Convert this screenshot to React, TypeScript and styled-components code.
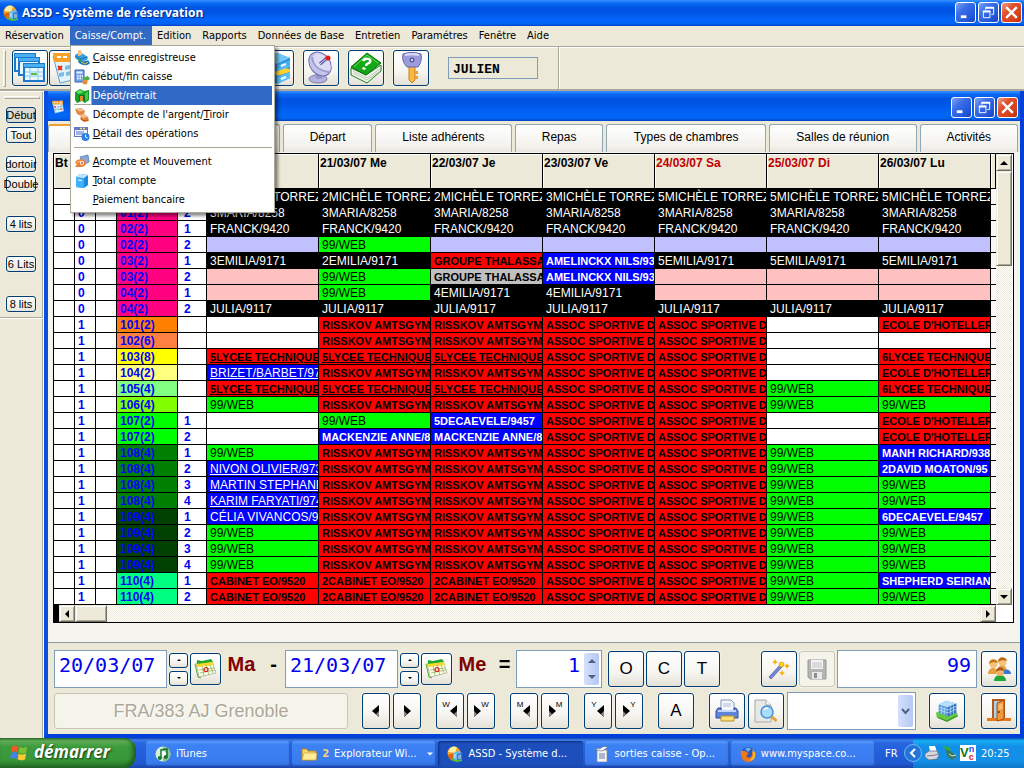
import React from "react";
import styled, { createGlobalStyle, css } from "styled-components";

const ui = `"DejaVu Sans Condensed", "DejaVu Sans", sans-serif`;
const arial = `"Liberation Sans", Arial, sans-serif`;
const mono = `"Liberation Mono", "Courier New", monospace`;
const wideMono = `"DejaVu Sans Mono", monospace`;
const beige = "#ece9d8";

const GlobalStyle = createGlobalStyle`
  *, *::before, *::after { box-sizing: border-box; }
  body { margin: 0; background: ${beige}; font-family: ${ui}; font-size: 11px; color: #000; }
  button, input, select { font: inherit; color: inherit; margin: 0; padding: 0; }
  svg { display: block; flex: none; }
`;

const Screen = styled.div`
  display: flex;
  flex-direction: column;
  min-height: 100vh;
  overflow: hidden;
`;

const blueBar = css`
  background: linear-gradient(#3a92ff 0, #0a6bf5 3px, #0054e3 8px, #0054e3 12px, #0366fb 80%, #0262ee 92%, #0043c8 100%);
`;

const TitleBar = styled.header<{ $child?: boolean }>`
  ${blueBar}
  display: flex;
  align-items: center;
  gap: ${(p) => (p.$child ? 0 : 3)}px;
  height: ${(p) => (p.$child ? 30 : 26)}px;
  padding: ${(p) => (p.$child ? "2px 2px 0 3px" : "0 2px 1px 3px")};
`;

const TitleText = styled.h1`
  flex: 1;
  margin: 0;
  font: bold 12px/18px "Open Sans", "Noto Sans", sans-serif;
  color: #fff;
  text-shadow: 1px 1px 1px #002a86;
`;

const Spacer = styled.div`
  flex: 1;
`;

const CaptionGroup = styled.div`
  display: flex;
  gap: 2px;
`;

const CaptionButton = styled.button<{ $close?: boolean }>`
  display: grid;
  place-items: center;
  width: 21px;
  height: 21px;
  border: 1px solid #fff;
  border-radius: 3px;
  background: ${(p) =>
    p.$close
      ? "linear-gradient(135deg, #f0a088 0, #e0502c 35%, #d8401c 75%, #b8300c 100%)"
      : "linear-gradient(135deg, #7fa5f5 0, #3a6fe8 35%, #2456dc 75%, #1a44b8 100%)"};
`;

const MenuBar = styled.nav`
  display: flex;
  height: 20px;
  background: ${beige};
`;

const MenuHolder = styled.div`
  position: relative;
`;

const MenuButton = styled.button<{ $open?: boolean }>`
  height: 19px;
  padding: 0 6px 1px 5px;
  border: 0;
  white-space: nowrap;
  background: ${(p) => (p.$open ? "#316ac5" : "transparent")};
  color: ${(p) => (p.$open ? "#fff" : "#000")};
`;

const Menu = styled.div`
  position: absolute;
  z-index: 10;
  top: 19px;
  left: 0;
  width: 205px;
  padding: 2px 2px 3px 3px;
  border: 1px solid #aca899;
  background: #fff;
  box-shadow: 3px 3px 3px rgba(0, 0, 0, 0.45);
`;

const MenuRow = styled.button<{ $active?: boolean }>`
  display: grid;
  grid-template-columns: 18px 1fr;
  width: 100%;
  height: 19px;
  padding: 0;
  border: 0;
  background: none;
  text-align: left;
  align-items: center;
  white-space: nowrap;
  color: ${(p) => (p.$active ? "#fff" : "#000")};
  & > span {
    padding-left: 1px;
    line-height: 19px;
    background: ${(p) => (p.$active ? "#316ac5" : "transparent")};
  }
`;

const IconSlot = styled.i<{ $active?: boolean }>`
  display: block;
  width: 18px;
  height: 19px;
  padding-top: 2px;
  border: solid #aca899;
  border-width: ${(p) => (p.$active ? "0 1px 1px 0" : "0")};
`;

const MenuRule = styled.hr`
  margin: 4px 0 4px 0;
  border: 0;
  border-top: 1px solid #aca899;
`;

const ToolStrip = styled.div`
  display: flex;
  height: 45px;
  border-top: 1px solid #aca899;
  border-bottom: 2px solid #aca899;
  box-shadow: inset 0 1px #fff;
`;

const ToolBar = styled.div`
  display: flex;
  align-items: center;
  gap: 9px;
  width: 559px;
  padding: 0 20px 0 3px;
  border-right: 1px solid #aca899;
  box-shadow: 1px 0 #fff;
`;

const ToolLead = styled.div`
  display: flex;
  align-items: center;
  gap: 6px;
`;

const Grip = styled.div<{ $flat?: boolean }>`
  width: ${(p) => (p.$flat ? "36px" : "3px")};
  height: ${(p) => (p.$flat ? "3px" : "37px")};
  border: 1px solid;
  border-color: #fff #aca899 #aca899 #fff;
`;

const xpButton = css`
  display: grid;
  place-items: center;
  border: 1px solid #003c74;
  border-radius: 3px;
  background: linear-gradient(#fff, #f6f5f1 60%, #e4e1d6);
  box-shadow: 0 0 0 1px #f2f0e6;
`;

const ToolButton = styled.button<{ $w?: number }>`
  ${xpButton}
  flex: none;
  width: ${(p) => p.$w ?? 36}px;
  height: 36px;
  font: 17px ${arial};
  &:disabled {
    border-color: #c9c7ba;
    background: #f5f4ea;
    color: #aca899;
  }
`;

const ToolPair = styled.div`
  display: flex;
  gap: 1px;
`;

const UserField = styled.input`
  width: 90px;
  height: 22px;
  margin-left: 10px;
  padding: 2px 4px 0;
  border: 1px solid #7f9db9;
  background: ${beige};
  font: bold 13px ${mono};
`;

const Workspace = styled.div`
  flex: 1;
  display: grid;
  grid-template-columns: 44px minmax(0, 1fr);
`;

const Side = styled.aside`
  border-right: 1px solid #fff;
  box-shadow: inset -1px 0 #aca899;
`;

const Dock = styled.div`
  display: flex;
  flex-direction: column;
  align-items: flex-start;
  gap: 4px;
  height: 227px;
  padding: 4px 0 0 4px;
  border-bottom: 1px solid #aca899;
  border-top: 1px solid #fff;
  box-shadow: 0 1px #fff;
`;

const DockButton = styled.button<{ $gap?: number; $on?: boolean }>`
  ${xpButton}
  justify-content: center;
  width: 30px;
  height: 16px;
  margin: ${(p) => p.$gap ?? 0}px 0 0 2px;
  font: 11px/14px ${arial};
  white-space: nowrap;
  background: ${(p) => (p.$on ? "#dedbd0" : "linear-gradient(#fff, #e8e6dc)")};
`;

const ChildWindow = styled.section`
  display: flex;
  flex-direction: column;
  min-width: 0;
  border: solid #0040d8;
  border-width: 0 4px 4px 4px;
  border-left-color: #0a50e0;
  background: ${beige};
`;

const Tabs = styled.div`
  display: flex;
  gap: 3px;
  height: 31px;
  padding: 3px 2px 0 0;
`;

const Tab = styled.button<{ $w: number; $active?: boolean }>`
  flex: ${(p) => p.$w} 1 0;
  min-width: 0;
  padding: 0 0 3px;
  border: 1px solid #91a7b4;
  border-top: ${(p) => (p.$active ? "2px solid #f0a030" : "1px solid #91a7b4")};
  border-bottom: 0;
  border-radius: 3px 3px 0 0;
  background: linear-gradient(#fff, #f2f1ec 80%, #e8e6de);
  font: 12px ${arial};
  white-space: nowrap;
`;

const TabPage = styled.div`
  flex: 1;
  padding: 1px 6px 0 5px;
  background: #f5f4ef;
  border-bottom: 1px solid #919b9c;
`;

const GridBox = styled.div`
  display: grid;
  grid-template-columns: minmax(0, 1fr) 17px;
  border: 1px solid #000;
  background: #fff;
`;

const Planning = styled.table`
  width: 100%;
  table-layout: fixed;
  border-collapse: separate;
  border-spacing: 0;
  font: 12px/13px ${arial};
`;

const HeadCell = styled.th<{ $red?: boolean }>`
  height: 35px;
  padding: 3px 0 0 1px;
  vertical-align: top;
  text-align: left;
  white-space: nowrap;
  overflow: hidden;
  background: ${beige};
  border-right: 1px solid #000;
  border-bottom: 1px solid #000;
  box-shadow: inset 1px 1px #fff;
  color: ${(p) => (p.$red ? "#c00000" : "#000")};
`;

const NumCell = styled.td<{ $bg?: string; $pad?: number }>`
  height: 16px;
  padding: 2px 0 0 ${(p) => p.$pad ?? 3}px;
  background: ${(p) => p.$bg ?? "#fff"};
  border-right: 1px solid #000;
  border-bottom: 1px solid #000;
  color: #00f;
  font-weight: bold;
`;

const kinds = {
  K: css`background: #000; color: #fff;`,
  W: css`background: #0f0;`,
  R: css`background: #f00; font-weight: bold; font-size: 11px;`,
  U: css`background: #f00; font-weight: bold; font-size: 11px; text-decoration: underline;`,
  L: css`background: #c0c0ff;`,
  P: css`background: #ffc0c0;`,
  B: css`background: #00f; color: #fff; font-weight: bold; font-size: 11px;`,
  b: css`background: #00f; color: #fff; text-decoration: underline;`,
  c: css`background: #00f; color: #fff;`,
  G: css`background: #c0c0c0; font-weight: bold; font-size: 11px;`,
  E: css`background: #fff;`,
};
type Kind = keyof typeof kinds;

const StayCell = styled.td<{ $kind: Kind }>`
  height: 16px;
  padding: 2px 0 0 3px;
  overflow: hidden;
  white-space: nowrap;
  border-right: 1px solid #000;
  border-bottom: 1px solid #000;
  ${(p) => kinds[p.$kind]}
`;

const EdgeCell = styled.td`
  padding: 0;
  border-bottom: 1px solid #000;
  background: #f8f8f8;
`;

const track = css`
  background: repeating-conic-gradient(#fff 0 25%, ${beige} 0 50%) 0 0 / 2px 2px;
`;

const raised = css`
  background: ${beige};
  border: 1px solid;
  border-color: ${beige} #716f64 #716f64 ${beige};
  box-shadow: inset 1px 1px #fff, inset -1px -1px #aca899;
`;

const VScroll = styled.div`
  ${track}
  display: flex;
  flex-direction: column;
  width: 16px;
`;

const HScroll = styled.div`
  ${track}
  display: flex;
  height: 17px;
  border-left: 5px solid #000;
`;

const ScrollButton = styled.button`
  ${raised}
  display: grid;
  place-items: center;
  flex: none;
  width: 16px;
  height: 17px;
`;

const Thumb = styled.div<{ $w?: number; $h?: number }>`
  ${raised}
  width: ${(p) => p.$w ?? 16}px;
  height: ${(p) => p.$h ?? 17}px;
`;

const Controls = styled.div`
  display: flex;
  flex-direction: column;
  gap: 4px;
  padding: 7px 3px 4px 6px;
`;

const ControlRow = styled.div`
  display: flex;
  align-items: center;
  height: 38px;
`;

const Group = styled.div<{ $ml?: number; $gap?: number; $grow?: boolean }>`
  display: flex;
  align-items: center;
  flex: ${(p) => (p.$grow ? "1 1 0" : "none")};
  min-width: 0;
  gap: ${(p) => p.$gap ?? 3}px;
  margin-left: ${(p) => p.$ml ?? 0}px;
`;

const Field = styled.input<{ $w?: number; $right?: boolean }>`
  flex: ${(p) => (p.$w ? "none" : "1 1 0")};
  width: ${(p) => (p.$w ? p.$w + "px" : "0")};
  min-width: 0;
  height: 38px;
  padding: 0 5px 8px 4px;
  border: 1px solid #7f9db9;
  background: #fff;
  color: #0000f0;
  font: 20px ${wideMono};
  text-align: ${(p) => (p.$right ? "right" : "left")};
`;

const CountBox = styled.div`
  display: flex;
  flex: none;
  width: 86px;
  height: 38px;
  padding: 2px;
  border: 1px solid #7f9db9;
  background: #fff;
`;

const CountInput = styled.input`
  flex: 1;
  min-width: 0;
  padding: 0 4px 8px 0;
  border: 0;
  color: #0000f0;
  font: 20px ${wideMono};
  text-align: right;
`;

const CountSpin = styled.div`
  display: flex;
  flex-direction: column;
  width: 15px;
  border-radius: 2px;
  background: linear-gradient(90deg, #d6e0fc, #b4c8f4);
`;

const FlatButton = styled.button`
  display: grid;
  place-items: center;
  flex: 1;
  border: 0;
  background: none;
`;

const Spin = styled.div`
  display: flex;
  flex-direction: column;
  gap: 3px;
  width: 19px;
`;

const SpinButton = styled.button`
  ${xpButton}
  height: 15px;
`;

const DateButton = styled.button`
  ${xpButton}
  width: 31px;
  height: 32px;
`;

const DayName = styled.span<{ $dark?: boolean; $w: number }>`
  flex: none;
  width: ${(p) => p.$w}px;
  padding-bottom: 10px;
  text-align: center;
  white-space: nowrap;
  font: bold 20px/24px ${arial};
  color: ${(p) => (p.$dark ? "#000" : "#800000")};
`;

const HostelButton = styled.button`
  flex: 1 1 0;
  height: 36px;
  border: 1px solid #c9c7ba;
  border-radius: 3px;
  background: #f5f4ea;
  font: 18px ${arial};
  color: #aca899;
  text-shadow: 1px 1px #fff;
`;

const ComboBox = styled.div`
  position: relative;
  width: 129px;
  height: 38px;
`;

const Combo = styled.select`
  appearance: none;
  width: 100%;
  height: 100%;
  border: 1px solid #7f9db9;
  border-radius: 0;
  background: #fff;
`;

const ComboArrow = styled.span`
  position: absolute;
  top: 3px;
  right: 3px;
  bottom: 3px;
  display: grid;
  place-items: center;
  width: 15px;
  border-radius: 2px;
  background: linear-gradient(90deg, #d6e0fc, #b4c8f4);
  pointer-events: none;
`;

const TaskBar = styled.footer`
  display: flex;
  height: 30px;
  background: linear-gradient(#1941a5 0, #3a80ee 2px, #2a66e0 5px, #245edb 50%, #2058d0 85%, #1a44a8 100%);
`;

const StartButton = styled.button`
  display: flex;
  align-items: center;
  gap: 5px;
  width: 136px;
  margin-right: 10px;
  padding: 0 0 2px 10px;
  border: 0;
  border-radius: 0 12px 12px 0;
  background: linear-gradient(#2c6e2c 0, #5eac56 3px, #3c9a3c 9px, #389838 70%, #2c7c2c 100%);
  box-shadow: inset -3px -2px 4px #1d5c1d;
  color: #fff;
  font: italic bold 17px/22px "Open Sans", sans-serif;
  text-shadow: 1px 1px 2px #123c12;
`;

const Tasks = styled.div`
  flex: 1;
  display: flex;
  gap: 2px;
  min-width: 0;
  padding: 3px 10px 2px 0;
`;

const Task = styled.button<{ $on?: boolean }>`
  flex: 1 1 0;
  min-width: 0;
  display: flex;
  align-items: center;
  gap: 5px;
  padding: 0 6px 0 9px;
  border: 0;
  border-radius: 3px;
  background: ${(p) =>
    p.$on ? "#1c4fbb" : "linear-gradient(#5a9afc 0, #3c81f3 4px, #3a7cf0 80%, #3470dc 100%)"};
  box-shadow: ${(p) => (p.$on ? "inset 1px 1px 2px #0c2c7c" : "inset -1px -1px 1px #2a5cc4")};
  color: #fff;
  white-space: nowrap;
  & > b { color: #ffd070; }
`;

const Language = styled.div`
  display: flex;
  align-items: center;
  width: 28px;
  color: #fff;
`;

const Tray = styled.div`
  display: flex;
  align-items: center;
  gap: 2px;
  width: 111px;
  background: linear-gradient(#0c59b9 0, #18b0f2 3px, #1290e8 8px, #1290e8 75%, #0f78c8 100%);
  color: #fff;
  & > svg:first-child { margin-left: -9px; }
  & > time { margin-left: 3px; }
`;

/* ---------- drawings ---------- */

type S = { s?: number };
const Svg = ({ s = 16, v = 16, children }: { s?: number; v?: number; children: React.ReactNode }) => (
  <svg width={s} height={s} viewBox={`0 0 ${v} ${v}`} aria-hidden="true">{children}</svg>
);

const AppIcon = ({ s = 16 }: S) => (
  <Svg s={s}>
    <circle cx="7" cy="7" r="6.5" fill="#f8a020" />
    <path d="M3 2a6 6 0 0 1 7-.5L8 7 1 6z" fill="#fff0a0" />
    <path d="M1 9l5-2v8C3 14 1 12 1 9z" fill="#d86810" />
    <path d="M6 7l5-2 4 2v7l-5 2-4-2z" fill="#68b8f0" />
    <path d="M10 8l5-1v7l-5 2z" fill="#2f7cc8" />
    <path d="M4 12l6 2.500 5-1.500v2l-6 1-5-2z" fill="#4cc030" />
    <path d="M7 9h2M7 11h2M11 10h3M11 12h3" stroke="#fff" strokeWidth=".8" />
  </Svg>
);

const MinIcon = () => <Svg s={15}><path d="M3 11h6v3H3z" fill="#fff" /></Svg>;
const RestoreIcon = () => (
  <Svg s={15}>
    <path d="M5 5V2.500h8.500V10H11" fill="none" stroke="#fff" />
    <path d="M5 3h9" stroke="#fff" strokeWidth="2" />
    <path d="M2.500 6.500h7v7h-7z" fill="none" stroke="#fff" />
    <path d="M2 7h8" stroke="#fff" strokeWidth="2" />
  </Svg>
);
const CloseIcon = () => <Svg s={17}><path d="M3 3l10 10M13 3L3 13" stroke="#fff" strokeWidth="2.200" /></Svg>;

const WindowsIcon = () => (
  <Svg s={34} v={34}>
    {[[1, 2], [5, 6], [10, 12]].map(([x, y]) => (
      <g key={x}>
        <path d={`M${x} ${y}h22v19h-22z`} fill="#1c78c8" />
        <path d={`M${x + 1} ${y + 1}h20v3h-20z`} fill="#48b0f0" />
        <path d={`M${x + 2} ${y + 5}h18v12h-18z`} fill="#e8f6ff" />
      </g>
    ))}
    <path d="M12 21h18M12 25h18M17 17v12M25 17v12" stroke="#8cc8ec" />
    <path d="M18 22h6v2h-6z" fill="#58c040" />
  </Svg>
);

const AgendaIcon = ({ s = 34 }: S) => (
  <Svg s={s} v={34}>
    <path d="M3 5l24-3 4 25-21 5z" fill="#e4f2fc" stroke="#58a4d8" />
    <path d="M3 2h26v9H4z" fill="#f8a028" />
    <path d="M7 6h4M13 6h4M21 5h5M21 8h5" stroke="#fff" strokeWidth="2" />
    <path d="M8 15l4 4m0-4l-4 4" stroke="#e03018" strokeWidth="2" />
    <path d="M15 15l5-1v4l-5 1zM22 14l5-1v4l-5 1zM9 22l5-1v4l-5 1zM16 21l5-1v4l-5 1z" fill="#78bce8" />
    <path d="M23 20l4 4m0-4l-4 4" stroke="#e03018" strokeWidth="2" />
  </Svg>
);

const CabinetIcon = () => (
  <Svg s={34} v={34}>
    <path d="M6 8l12-6 13 5v20l-13 6-12-6z" fill="#2888d8" />
    <path d="M6 8l12-6 13 5-13 6z" fill="#70c8f8" />
    <path d="M18 14l13-5v5l-13 5z" fill="#48b0f0" />
    <path d="M16 21l10-4 5 1v3l-13 4z" fill="#ffd030" />
    <path d="M18 18l13-4v2l-13 4zM18 26l13-5v6l-13 6z" fill="#58c0f8" />
    <path d="M22 15l5-2M22 28l5-2" stroke="#fff" strokeWidth="2" />
  </Svg>
);

const DishIcon = () => (
  <Svg s={34} v={34}>
    <ellipse cx="14" cy="28" rx="9" ry="4" fill="#b4b4dc" stroke="#7878b0" />
    <path d="M11 22h8l-1 6h-6z" fill="#9898cc" />
    <ellipse cx="16" cy="13" rx="10" ry="13" transform="rotate(-38 16 13)" fill="#c4c4ea" stroke="#7070b0" />
    <ellipse cx="18" cy="12" rx="7" ry="11" transform="rotate(-38 18 12)" fill="#dcdcf4" />
    <path d="M8 6c1 9 8 14 17 15" fill="none" stroke="#9c9cd0" strokeWidth="2" />
    <path d="M16 13l7-6" stroke="#5050a0" strokeWidth="3" />
    <path d="M16 13l7-6" stroke="#e8e8ff" />
    <circle cx="24" cy="7" r="2.500" fill="#e81818" />
  </Svg>
);

const BookIcon = () => (
  <Svg s={34} v={34}>
    <path d="M2 17l15 7 15-10v6L18 32 2 24z" fill="#f4f8f0" stroke="#188018" />
    <path d="M2 16L18 2l14 10-15 12z" fill="#14a818" stroke="#087008" />
    <path d="M5 16L18 4l11 8" fill="none" stroke="#60e050" />
    <path d="M14 10c2-4 9-2 7 1-1 2-4 1-4 4" fill="none" stroke="#fff" strokeWidth="2.500" />
    <path d="M14 16l3 1-1 2-3-1z" fill="#fff" />
    <path d="M4 20l14 7 13-9M4 22l14 7 13-9" fill="none" stroke="#b8c8b0" />
  </Svg>
);

const KeyIcon = () => (
  <Svg s={34} v={34}>
    <path d="M15 15h6v14l-3 3-3-3z" fill="#f8b848" stroke="#c88018" />
    <path d="M21 20h3v3h-3zM21 25h3v3h-3z" fill="#f0a030" />
    <path d="M9 3c5-2 13-2 18 0 1 4 0 9-3 13H13C9 12 8 7 9 3z" fill="#9c9cdc" stroke="#6464a4" />
    <path d="M11 4c4-1 10-1 14 0" stroke="#dcdcfc" fill="none" strokeWidth="2" />
    <circle cx="18" cy="9" r="2.500" fill="#5858a8" /><circle cx="18" cy="9" r="1" fill="#fff" />
  </Svg>
);

const RegisterIcon = () => (
  <Svg>
    <path d="M1 5l5-3 8 5-1 3-6 2-6-4z" fill="#38a0e0" /><path d="M4 0h3l1 5-4 1z" fill="#f8c088" />
    <path d="M2 6l5 3 6-2" stroke="#1870b8" fill="none" /><path d="M4 11c2-2 6 2 10-1l2 3c-3 4-9 2-11 0z" fill="#1878c0" />
    <path d="M2 8l3 3 3 1v-2z" fill="#28a048" /><path d="M7 12l4 2 3-2" stroke="#f8c020" fill="none" />
  </Svg>
);
const CalcIcon = () => (
  <Svg>
    <path d="M1 1h9v12H1z" fill="#78a0e8" stroke="#3060b0" /><path d="M2.500 2.500h6v2h-6z" fill="#e0f0ff" />
    <path d="M3 7h6M3 9.500h6" stroke="#fff" strokeDasharray="1.500 1" strokeWidth="1.500" />
    <path d="M8 9l6-2 2 3-5 3z" fill="#40b050" /><circle cx="11" cy="13" r="2.500" fill="#e89030" />
  </Svg>
);
const DepositIcon = () => (
  <Svg>
    <path d="M1 4l5-3 4 2 5-1v10l-4 3-3-2-5 2-2-3z" fill="#18a028" />
    <path d="M2 4l4-2 4 2-5 2z" fill="#60e060" />
    <path d="M5 7h6v6H5z" fill="#087818" /><path d="M6 8h3v5H6z" fill="#e88830" />
    <path d="M11 5l3-1v7l-3 2z" fill="#40d048" />
  </Svg>
);
const CoinsIcon = () => (
  <Svg>
    <path d="M1 2l6-1 4 3-1 3 4 3 1 4-5 1-4-3 1-3-4-2z" fill="#e08840" />
    <path d="M2 2.500l5-1 3 2-4 1zM6 8l4-1 3 3-4 1z" fill="#f8c090" />
    <path d="M7 12l3 2 4-1" stroke="#a85018" fill="none" />
  </Svg>
);
const DetailIcon = () => (
  <Svg>
    <path d="M0 1h14v10H0z" fill="#6878c0" /><path d="M1 4h12v6H1z" fill="#f0f4ff" />
    <path d="M6 2.500h2M9 2.500h2" stroke="#ffe060" strokeWidth="1.500" /><path d="M2 6h8M2 8h8" stroke="#5070d0" />
    <circle cx="11.500" cy="11" r="4" fill="#2880e0" /><path d="M11.500 8.500V11l2 1" stroke="#fff" fill="none" />
  </Svg>
);
const MoveIcon = () => (
  <Svg>
    <path d="M6 3l8-2 1 7-6 3z" fill="#88a8d8" stroke="#5070a8" strokeWidth=".7" />
    <path d="M1 9c1-4 7-5 10-2 2 3 0 6-4 6H1l2-3z" fill="#f08030" />
    <path d="M3 9c2-2 4-2 6-1" stroke="#ffd098" fill="none" /><circle cx="8" cy="9" r="2" fill="#fff" /><circle cx="8" cy="9" r="1" fill="#e04010" />
  </Svg>
);
const TotalIcon = () => (
  <Svg>
    <path d="M2 4l4-3 8 1v10l-4 3-8-1z" fill="#1888e0" /><path d="M2 4l8 1v10l-8-1z" fill="#40b0f8" />
    <path d="M6 1l8 1-4 3-8-1z" fill="#c0e8ff" /><path d="M4 7l4 .5" stroke="#fff" />
  </Svg>
);

const CalendarIcon = () => (
  <Svg s={24} v={24}>
    <path d="M2 6l16-2 4 12-17 4z" fill="#fffef0" stroke="#a0a878" strokeWidth=".7" />
    <path d="M3 3l5 1 9-2 2 3L3 8z" fill="#20a830" />
    <path d="M2 7l17-2 1 3L4 10z" fill="#f8d828" />
    <path d="M1 7l3 13 3 1" fill="none" stroke="#58a830" />
    <path d="M5 13l15-2M6 16l15-3M8 9l2 10M12 8l3 10M16 8l3 8" stroke="#8cb860" strokeWidth=".8" />
    <circle cx="12" cy="12.500" r="2" fill="none" stroke="#e02020" strokeWidth="1.200" />
  </Svg>
);

const WandIcon = () => (
  <Svg s={24} v={24}>
    <path d="M2 20L13 8l2 2L4 22z" fill="#7888d8" stroke="#404c98" strokeWidth=".7" />
    <circle cx="14.500" cy="7.500" r="2.500" fill="#ffd020" stroke="#c09010" strokeWidth=".6" />
    <path d="M8 2l1 2 2 1-2 1-1 2-1-2-2-1 2-1zM20 6l1 2 2 1-2 1-1 2-1-2-2-1 2-1zM15 13l1 2 2 1-2 1-1 2-1-2-2-1 2-1z" fill="#f8b010" />
  </Svg>
);
const SaveIcon = () => (
  <Svg s={24} v={24}>
    <path d="M3 3h18v19H5l-2-2z" fill="#b4b4b4" stroke="#989898" /><path d="M6 3h12v9H6z" fill="#f4f4f4" />
    <path d="M7 6h10M7 8h10M7 10h10" stroke="#c0c0c0" /><path d="M7 15h10v7H7z" fill="#e8e8e8" /><path d="M9 16h3v5H9z" fill="#8c8c8c" />
  </Svg>
);
const PeopleIcon = () => (
  <Svg s={26} v={26}>
    <path d="M2 18c0-8 10-8 10 0zM12 14c0-7 9-7 9 2z" fill="#e8a040" /><path d="M16 18c0-6 9-6 9 0z" fill="#3878d0" />
    <circle cx="7.500" cy="8" r="4" fill="#f8c078" /><path d="M3 8c0-6 8-6 9-1-3-1-6-1-9 1z" fill="#c87818" />
    <circle cx="16.500" cy="6" r="4" fill="#f8c078" /><path d="M12 6c0-6 8-6 9-1-3-1-6-1-9 1z" fill="#b86810" />
    <path d="M8 25c0-8 12-8 12 0z" fill="#20a838" /><circle cx="14" cy="16" r="4" fill="#f0b468" />
    <path d="M10 16c0-6 8-6 8-1-3-1-5-1-8 1z" fill="#a85818" />
  </Svg>
);
const PrinterIcon = ({ s = 24 }: S) => (
  <Svg s={s} v={24}>
    <path d="M6 1h10l3 3v8H6z" fill="#f4f8ff" stroke="#8090b8" /><path d="M8 5h8M8 7h8" stroke="#b0bcd8" />
    <path d="M3 9h3v3h13V9h2l2 3v7H1v-7z" fill="#5c84dc" stroke="#3450a0" /><path d="M3 12h18" stroke="#c0d4ff" strokeWidth="2" />
    <path d="M6 17h13v5H6z" fill="#ffe070" stroke="#b89028" />
  </Svg>
);
const TrayPrinter = () => (
  <Svg>
    <path d="M5 1h6l2 6H6z" fill="#fff" /><path d="M1 9l4-3h8l2 4-2 4-8 1-4-3z" fill="#d8d8e0" stroke="#606878" strokeWidth=".7" />
    <path d="M3 11l9-1 2-1" stroke="#787c90" fill="none" />
  </Svg>
);
const PreviewIcon = () => (
  <Svg s={26} v={26}>
    <path d="M2 2h11l5 5v17H2z" fill="#e8e8e8" stroke="#a8a8a8" /><path d="M13 2v5h5" fill="#fff" stroke="#a8a8a8" />
    <circle cx="14" cy="14" r="6" fill="#a8dcfc" stroke="#4890d8" strokeWidth="1.500" /><path d="M11 12c1-2 3-2 4-2" stroke="#fff" fill="none" strokeWidth="1.500" />
    <path d="M18.500 18.500l5 4.500" stroke="#e8a030" strokeWidth="3" />
  </Svg>
);
const BuildingIcon = () => (
  <Svg s={24} v={26}>
    <path d="M1 15l7-3 16 3 1 4-12 6-11-5z" fill="#68c840" /><path d="M3 20l10 4 11-6" stroke="#2c8820" fill="none" />
    <path d="M4 6l8-4 11 3v10l-9 4-10-4z" fill="#5a9cdc" /><path d="M4 6l8-4 11 3-9 4z" fill="#b8e0fc" /><path d="M14 9l9-4v10l-9 4z" fill="#3474bc" />
    <path d="M5 9l9 3M5 12l9 3M14 12l9-4M14 15l9-4M7 8v8M10 9v8M17 8v9M20 7v9" stroke="#c4e4fc" strokeWidth=".8" />
  </Svg>
);
const DoorIcon = () => (
  <Svg s={26} v={26}>
    <path d="M1 20h24v3H1z" fill="#e87818" /><path d="M6 1h13v19H6z" fill="#b85818" /><path d="M8 3h9v17H8z" fill="#a8d4f4" />
    <path d="M11 5l7-3v19l-7 2z" fill="#f09838" stroke="#a85010" /><path d="M12.500 7l4-2v6l-4 1z" fill="#ffc070" /><circle cx="12.800" cy="14" r="1" fill="#603000" />
  </Svg>
);

const Arrow = ({ d, w = 8, c = "#000" }: { d: "l" | "r" | "u" | "d"; w?: number; c?: string }) => {
  const p = { l: "M6 0v8L2 4z", r: "M2 0v8l4-4z", u: "M0 6h8L4 2z", d: "M0 2h8L4 6z" }[d];
  return <Svg s={w} v={8}><path d={p} fill={c} /></Svg>;
};

const StepLabel = styled.span<{ $back?: boolean }>`
  display: flex;
  flex-direction: ${(p) => (p.$back ? "row" : "row-reverse")};
  align-items: flex-start;
  font: 8px/8px ${arial};
  padding-bottom: 3px;
  & > svg { margin-top: 3px; }
`;

const BigArrow = ({ back }: { back?: boolean }) => (
  <svg width="8" height="14" viewBox="0 0 8 14" aria-hidden="true">
    <path d={back ? "M7 1v12L0 7z" : "M1 1v12l7-6z"} fill="#000" />
    <path d={back ? "M7 7v6L4 10z" : "M1 7v6l3-3z"} fill="#888" />
  </svg>
);

const Flag = () => (
  <Svg s={19} v={20}>
    <path d="M2 4c3-2 5-1 7 0L8 10C6 9 4 8 1 10z" fill="#f05828" /><path d="M10 4c2 1 4 2 8 0l-1 6c-3 2-5 1-8 0z" fill="#7cc030" />
    <path d="M1 11c3-2 5-1 7 0l-1 6c-2-1-4-2-7 0z" fill="#4880f0" /><path d="M9 11c2 1 4 2 8 0l-1 6c-3 2-5 1-8 0z" fill="#f8c830" />
  </Svg>
);
const ITunes = () => (
  <Svg><circle cx="8" cy="8" r="7.500" fill="#d8f0d8" /><path d="M8 .5a7.500 7.500 0 0 1 0 15z" fill="#88c890" /><circle cx="8" cy="8" r="3" fill="#fff" />
    <path d="M6 12V4l6-1v8" fill="none" stroke="#107830" strokeWidth="1.500" /><circle cx="4.800" cy="12" r="2" fill="#107830" /><circle cx="10.800" cy="11" r="2" fill="#107830" /></Svg>
);
const Folder = () => (
  <Svg><path d="M1 3h5l1 2h8v9H1z" fill="#f8d868" stroke="#b08820" /><path d="M3 7h13l-1 7H1z" fill="#ffec98" stroke="#c09830" strokeWidth=".6" /></Svg>
);
const Sheet = () => (
  <Svg><path d="M3 4h10v12H3z" fill="#f4f4f8" stroke="#888" strokeWidth=".7" /><path d="M5 8h6M5 10h6M5 12h6" stroke="#6878a0" />
    <path d="M1 4c3-4 4 0 6-2s5-2 7 0c-3 0-4 3-7 3-2 0-3-2-6-1z" fill="#f8f8f8" stroke="#506088" strokeWidth=".6" /></Svg>
);
const Fox = () => (
  <Svg><circle cx="8" cy="8" r="7" fill="#2858b8" /><path d="M5 3c3-2 5-1 6 0L8 6z" fill="#68b0e8" />
    <path d="M1 4c1 1 2 1 3 1 2 0 4 2 5 3-2 0-3 1-2 3 3 2 6-1 5-5l3 0c1 5-2 10-7 10S0 11 1 4z" fill="#f07818" /><path d="M12 3c3 2 4 5 3 8-1 3-4 4-6 4 4-3 5-7 3-12z" fill="#f8b828" /></Svg>
);
const Chevron = () => (
  <Svg s={18} v={18}><circle cx="9" cy="9" r="8.500" fill="#2474d8" stroke="#70b8f8" /><path d="M11 5L7 9l4 4" fill="none" stroke="#fff" strokeWidth="2" /></Svg>
);
const Plug = () => (
  <Svg><path d="M1 1l4 1 1-1 3 4-3 2z" fill="#30b030" /><path d="M4 4l7 4 4 3-5 4-5-4z" fill="#3c7858" /><path d="M7 9l3 2 4-1" stroke="#d8e8d8" fill="none" /></Svg>
);

const VncBox = styled.span`
  display: flex;
  width: 16px;
  height: 16px;
  background: #fff;
  font: bold 13px/16px ${arial};
  color: #107818;
  & > span { font-size: 9px; line-height: 8px; color: #2050e0; }
  & > span > em { display: block; font-style: normal; color: #e02020; }
`;

/* ---------- data ---------- */

const fileMenu = [
  { icon: <RegisterIcon />, key: "C", pre: "", post: "aisse enregistreuse" },
  { icon: <CalcIcon />, key: "", pre: "Début/fin caisse", post: "" },
  { icon: <DepositIcon />, key: "", pre: "Dépôt/retrait", post: "", active: true },
  { icon: <CoinsIcon />, key: "T", pre: "Décompte de l'argent/", post: "iroir" },
  { icon: <DetailIcon />, key: "D", pre: "", post: "étail des opérations" },
  null,
  { icon: <MoveIcon />, key: "A", pre: "", post: "compte et Mouvement" },
  { icon: <TotalIcon />, key: "T", pre: "", post: "otal compte" },
  { icon: null, key: "P", pre: "", post: "aiement bancaire" },
];

const days = ["20/03/07 Ma", "21/03/07 Me", "22/03/07 Je", "23/03/07 Ve", "24/03/07 Sa", "25/03/07 Di", "26/03/07 Lu"];

type Stay = [Kind, string];
const k = (t: string): Stay => ["K", t];
const B = (t: string): Stay => ["B", t];
const W: Stay = ["W", "99/WEB"];
const L: Stay = ["L", ""];
const P: Stay = ["P", ""];
const E: Stay = ["E", ""];
const RI: Stay = ["R", "RISSKOV AMTSGYM"];
const AS: Stay = ["R", "ASSOC SPORTIVE D"];
const EC: Stay = ["R", "ECOLE D'HOTELLER"];
const LY: Stay = ["U", "5LYCEE TECHNIQUE"];
const L6: Stay = ["R", "6LYCEE TECHNIQUE"];
const CA: Stay = ["R", "CABINET EO/9520"];
const C2: Stay = ["R", "2CABINET EO/9520"];
const AM = B("AMELINCKX NILS/93");
const MK = B("MACKENZIE ANNE/8");
const all = (t: string) => days.map(() => k(t));

const pink = "#ff0080";
const rows: { b: string; room: string; color: string; bed: string; stays: Stay[] }[] = [
  { b: "0", room: "01(2)", color: pink, bed: "1", stays: [2, 2, 2, 3, 5, 5, 5].map((n) => k(n + "MICHÈLE TORREZ")) },
  { b: "0", room: "01(2)", color: pink, bed: "2", stays: all("3MARIA/8258") },
  { b: "0", room: "02(2)", color: pink, bed: "1", stays: all("FRANCK/9420") },
  { b: "0", room: "02(2)", color: pink, bed: "2", stays: [L, W, L, L, L, L, L] },
  { b: "0", room: "03(2)", color: pink, bed: "1", stays: [k("3EMILIA/9171"), k("2EMILIA/9171"), ["R", "GROUPE THALASSA"], AM, k("5EMILIA/9171"), k("5EMILIA/9171"), k("5EMILIA/9171")] },
  { b: "0", room: "03(2)", color: pink, bed: "2", stays: [P, W, ["G", "GROUPE THALASSA"], AM, P, P, P] },
  { b: "0", room: "04(2)", color: pink, bed: "1", stays: [P, W, k("4EMILIA/9171"), k("4EMILIA/9171"), P, P, P] },
  { b: "0", room: "04(2)", color: pink, bed: "2", stays: all("JULIA/9117") },
  { b: "1", room: "101(2)", color: "#ff8000", bed: "", stays: [E, RI, RI, AS, AS, E, EC] },
  { b: "1", room: "102(6)", color: "#ff8040", bed: "", stays: [E, RI, RI, AS, AS, E, E] },
  { b: "1", room: "103(8)", color: "#ffff00", bed: "", stays: [LY, LY, LY, AS, AS, E, L6] },
  { b: "1", room: "104(2)", color: "#ffff80", bed: "", stays: [["b", "BRIZET/BARBET/97"], RI, RI, AS, AS, E, EC] },
  { b: "1", room: "105(4)", color: "#80ff80", bed: "", stays: [LY, LY, LY, AS, AS, W, L6] },
  { b: "1", room: "106(4)", color: "#80ff00", bed: "", stays: [W, RI, RI, AS, AS, W, W] },
  { b: "1", room: "107(2)", color: "#00ff00", bed: "1", stays: [E, W, B("5DECAEVELE/9457"), AS, AS, E, EC] },
  { b: "1", room: "107(2)", color: "#00ff00", bed: "2", stays: [E, MK, MK, AS, AS, E, EC] },
  { b: "1", room: "108(4)", color: "#008000", bed: "1", stays: [W, RI, RI, AS, AS, W, B("MANH RICHARD/938")] },
  { b: "1", room: "108(4)", color: "#008000", bed: "2", stays: [["b", "NIVON OLIVIER/973"], RI, RI, AS, AS, W, B("2DAVID MOATON/95")] },
  { b: "1", room: "108(4)", color: "#008000", bed: "3", stays: [["b", "MARTIN STEPHANE"], RI, RI, AS, AS, W, W] },
  { b: "1", room: "108(4)", color: "#008000", bed: "4", stays: [["b", "KARIM FARYATI/974"], RI, RI, AS, AS, W, W] },
  { b: "1", room: "109(4)", color: "#004000", bed: "1", stays: [["c", "CÉLIA VIVANCOS/97"], RI, RI, AS, AS, W, B("6DECAEVELE/9457")] },
  { b: "1", room: "109(4)", color: "#004000", bed: "2", stays: [W, RI, RI, AS, AS, W, W] },
  { b: "1", room: "109(4)", color: "#004000", bed: "3", stays: [W, RI, RI, AS, AS, W, W] },
  { b: "1", room: "109(4)", color: "#004000", bed: "4", stays: [W, RI, RI, AS, AS, W, W] },
  { b: "1", room: "110(4)", color: "#00ff80", bed: "1", stays: [CA, C2, C2, AS, AS, W, B("SHEPHERD SEIRIAN")] },
  { b: "1", room: "110(4)", color: "#00ff80", bed: "2", stays: [CA, C2, C2, AS, AS, W, W] },
];

const Captions = () => (
  <CaptionGroup>
    <CaptionButton aria-label="Réduire"><MinIcon /></CaptionButton>
    <CaptionButton aria-label="Restaurer"><RestoreIcon /></CaptionButton>
    <CaptionButton $close aria-label="Fermer"><CloseIcon /></CaptionButton>
  </CaptionGroup>
);

const DateGroup = ({ value, label }: { value: string; label: string }) => (
  <Group $gap={2}>
    <Field $w={113} defaultValue={value} aria-label={label} />
    <Spin>
      <SpinButton aria-label="Jour suivant"><Arrow d="u" w={4} /></SpinButton>
      <SpinButton aria-label="Jour précédent"><Arrow d="d" w={4} /></SpinButton>
    </Spin>
    <DateButton aria-label="Calendrier"><CalendarIcon /></DateButton>
  </Group>
);

const StepPair = ({ unit, ml }: { unit: string; ml: number }) => (
  <Group $ml={ml}>
    <ToolButton $w={28} aria-label={"Précédent " + unit}><StepLabel $back>{unit}<BigArrow back /></StepLabel></ToolButton>
    <ToolButton $w={28} aria-label={"Suivant " + unit}><StepLabel>{unit}<BigArrow /></StepLabel></ToolButton>
  </Group>
);

export default function App() {
  return (
    <Screen>
      <GlobalStyle />
      <TitleBar>
        <AppIcon />
        <TitleText>ASSD - Système de réservation</TitleText>
        <Captions />
      </TitleBar>
      <MenuBar>
        <MenuButton>Réservation</MenuButton>
        <MenuHolder>
          <MenuButton $open>Caisse/Compt.</MenuButton>
          <Menu>
            {fileMenu.map((m, i) =>
              m ? (
                <MenuRow key={i} $active={m.active}>
                  <IconSlot $active={m.active}>{m.icon}</IconSlot>
                  <span>{m.pre}{m.key && <u>{m.key}</u>}{m.post}</span>
                </MenuRow>
              ) : (
                <MenuRule key={i} />
              )
            )}
          </Menu>
        </MenuHolder>
        {["Edition", "Rapports", "Données de Base", "Entretien", "Paramétres", "Fenêtre", "Aide"].map((t) => (
          <MenuButton key={t}>{t}</MenuButton>
        ))}
      </MenuBar>
      <ToolStrip>
        <ToolBar>
          <ToolLead>
            <Grip />
            <ToolPair>
              <ToolButton aria-label="Fenêtres"><WindowsIcon /></ToolButton>
              <ToolButton aria-label="Agenda"><AgendaIcon /></ToolButton>
            </ToolPair>
          </ToolLead>
          <Spacer />
          <ToolButton aria-label="Archives"><CabinetIcon /></ToolButton>
          <ToolButton aria-label="Connexion"><DishIcon /></ToolButton>
          <ToolButton aria-label="Manuel"><BookIcon /></ToolButton>
          <ToolButton aria-label="Clé"><KeyIcon /></ToolButton>
          <UserField defaultValue="JULIEN" aria-label="Utilisateur" />
        </ToolBar>
      </ToolStrip>
      <Workspace>
        <Side>
          <Dock>
            <Grip $flat />
            <DockButton $gap={4} $on>Début</DockButton>
            <DockButton>Tout</DockButton>
            <DockButton $gap={9}>dortoir</DockButton>
            <DockButton>Double</DockButton>
            <DockButton $gap={20}>4 lits</DockButton>
            <DockButton $gap={20}>6 Lits</DockButton>
            <DockButton $gap={20}>8 lits</DockButton>
          </Dock>
        </Side>
        <ChildWindow>
          <TitleBar as="div" $child>
            <AgendaIcon s={14} />
            <Spacer />
            <Captions />
          </TitleBar>
          <Tabs>
            <Tab $w={140} $active aria-label="Planning" />
            <Tab $w={89} aria-label="Arrivée" />
            <Tab $w={88}>Départ</Tab>
            <Tab $w={137}>Liste adhérents</Tab>
            <Tab $w={88}>Repas</Tab>
            <Tab $w={160}>Types de chambres</Tab>
            <Tab $w={148}>Salles de réunion</Tab>
            <Tab $w={98}>Activités</Tab>
          </Tabs>
          <TabPage>
            <GridBox>
              <Planning>
                <colgroup>
                  <col style={{ width: 21 }} /><col style={{ width: 21 }} /><col style={{ width: 21 }} />
                  <col style={{ width: 61 }} /><col style={{ width: 29 }} />
                  {days.map((d) => <col key={d} />)}
                  <col style={{ width: 5 }} />
                </colgroup>
                <thead>
                  <tr>
                    <HeadCell>Bt</HeadCell><HeadCell /><HeadCell /><HeadCell /><HeadCell />
                    {days.map((d) => <HeadCell key={d} $red={/Sa|Di/.test(d)}>{d}</HeadCell>)}
                    <HeadCell />
                  </tr>
                </thead>
                <tbody>
                  {rows.map((r, i) => (
                    <tr key={i}>
                      <NumCell />
                      <NumCell>{r.b}</NumCell>
                      <NumCell />
                      <NumCell $bg={r.color}>{r.room}</NumCell>
                      <NumCell $pad={6}>{r.bed}</NumCell>
                      {r.stays.map(([kind, t], j) => <StayCell key={j} $kind={kind}>{t}</StayCell>)}
                      <EdgeCell />
                    </tr>
                  ))}
                </tbody>
              </Planning>
              <VScroll>
                <ScrollButton aria-label="Haut"><Arrow d="u" /></ScrollButton>
                <Thumb $h={95} />
                <Spacer />
                <ScrollButton aria-label="Bas"><Arrow d="d" /></ScrollButton>
              </VScroll>
              <HScroll>
                <ScrollButton aria-label="Gauche"><Arrow d="l" /></ScrollButton>
                <Thumb $w={32} />
                <Spacer />
                <ScrollButton aria-label="Droite"><Arrow d="r" /></ScrollButton>
              </HScroll>
            </GridBox>
          </TabPage>
          <Controls>
            <ControlRow>
              <DateGroup value="20/03/07" label="Arrivée" />
              <DayName $w={41}>Ma</DayName>
              <DayName $w={23} $dark>-</DayName>
              <DateGroup value="21/03/07" label="Départ" />
              <DayName $w={41}>Me</DayName>
              <DayName $w={23} $dark>=</DayName>
              <CountBox>
                <CountInput defaultValue="1" aria-label="Nuits" />
                <CountSpin>
                  <FlatButton aria-label="Plus"><Arrow d="u" c="#4d6185" /></FlatButton>
                  <FlatButton aria-label="Moins"><Arrow d="d" c="#4d6185" /></FlatButton>
                </CountSpin>
              </CountBox>
              <Group $ml={6} $gap={2}>
                <ToolButton>O</ToolButton>
                <ToolButton>C</ToolButton>
                <ToolButton>T</ToolButton>
              </Group>
              <Group $ml={41} $gap={2} $grow>
                <ToolButton aria-label="Assistant"><WandIcon /></ToolButton>
                <ToolButton disabled aria-label="Enregistrer"><SaveIcon /></ToolButton>
                <Field defaultValue="99" $right aria-label="Numéro" />
              </Group>
              <Group $ml={4}>
                <ToolButton aria-label="Clients"><PeopleIcon /></ToolButton>
              </Group>
            </ControlRow>
            <ControlRow>
              <HostelButton disabled>FRA/383 AJ Grenoble</HostelButton>
              <StepPair unit="" ml={14} />
              <StepPair unit="W" ml={15} />
              <StepPair unit="M" ml={15} />
              <StepPair unit="Y" ml={15} />
              <Group $ml={15}><ToolButton>A</ToolButton></Group>
              <Group $ml={15}>
                <ToolButton aria-label="Imprimer"><PrinterIcon /></ToolButton>
                <ToolButton aria-label="Aperçu"><PreviewIcon /></ToolButton>
                <ComboBox>
                  <Combo aria-label="Rapport"><option></option></Combo>
                  <ComboArrow><Svg s={9} v={9}><path d="M1 2l3.500 4L8 2" fill="none" stroke="#4d6185" strokeWidth="2" /></Svg></ComboArrow>
                </ComboBox>
              </Group>
              <Group $ml={13}><ToolButton aria-label="Établissement"><BuildingIcon /></ToolButton></Group>
              <Group $ml={16}><ToolButton aria-label="Quitter"><DoorIcon /></ToolButton></Group>
            </ControlRow>
          </Controls>
        </ChildWindow>
      </Workspace>
      <TaskBar>
        <StartButton><Flag />démarrer</StartButton>
        <Tasks>
          <Task><ITunes />iTunes</Task>
          <Task><Folder /><b>2</b>Explorateur Wi...<Spacer /><Arrow d="d" w={6} c="#fff" /></Task>
          <Task $on><AppIcon />ASSD - Système d...</Task>
          <Task><Sheet />sorties caisse - Op...</Task>
          <Task><Fox />www.myspace.co...</Task>
        </Tasks>
        <Language>FR</Language>
        <Tray>
          <Chevron />
          <TrayPrinter />
          <Plug />
          <VncBox>V<span>n<em>c</em></span></VncBox>
          <time>20:25</time>
        </Tray>
      </TaskBar>
    </Screen>
  );
}
